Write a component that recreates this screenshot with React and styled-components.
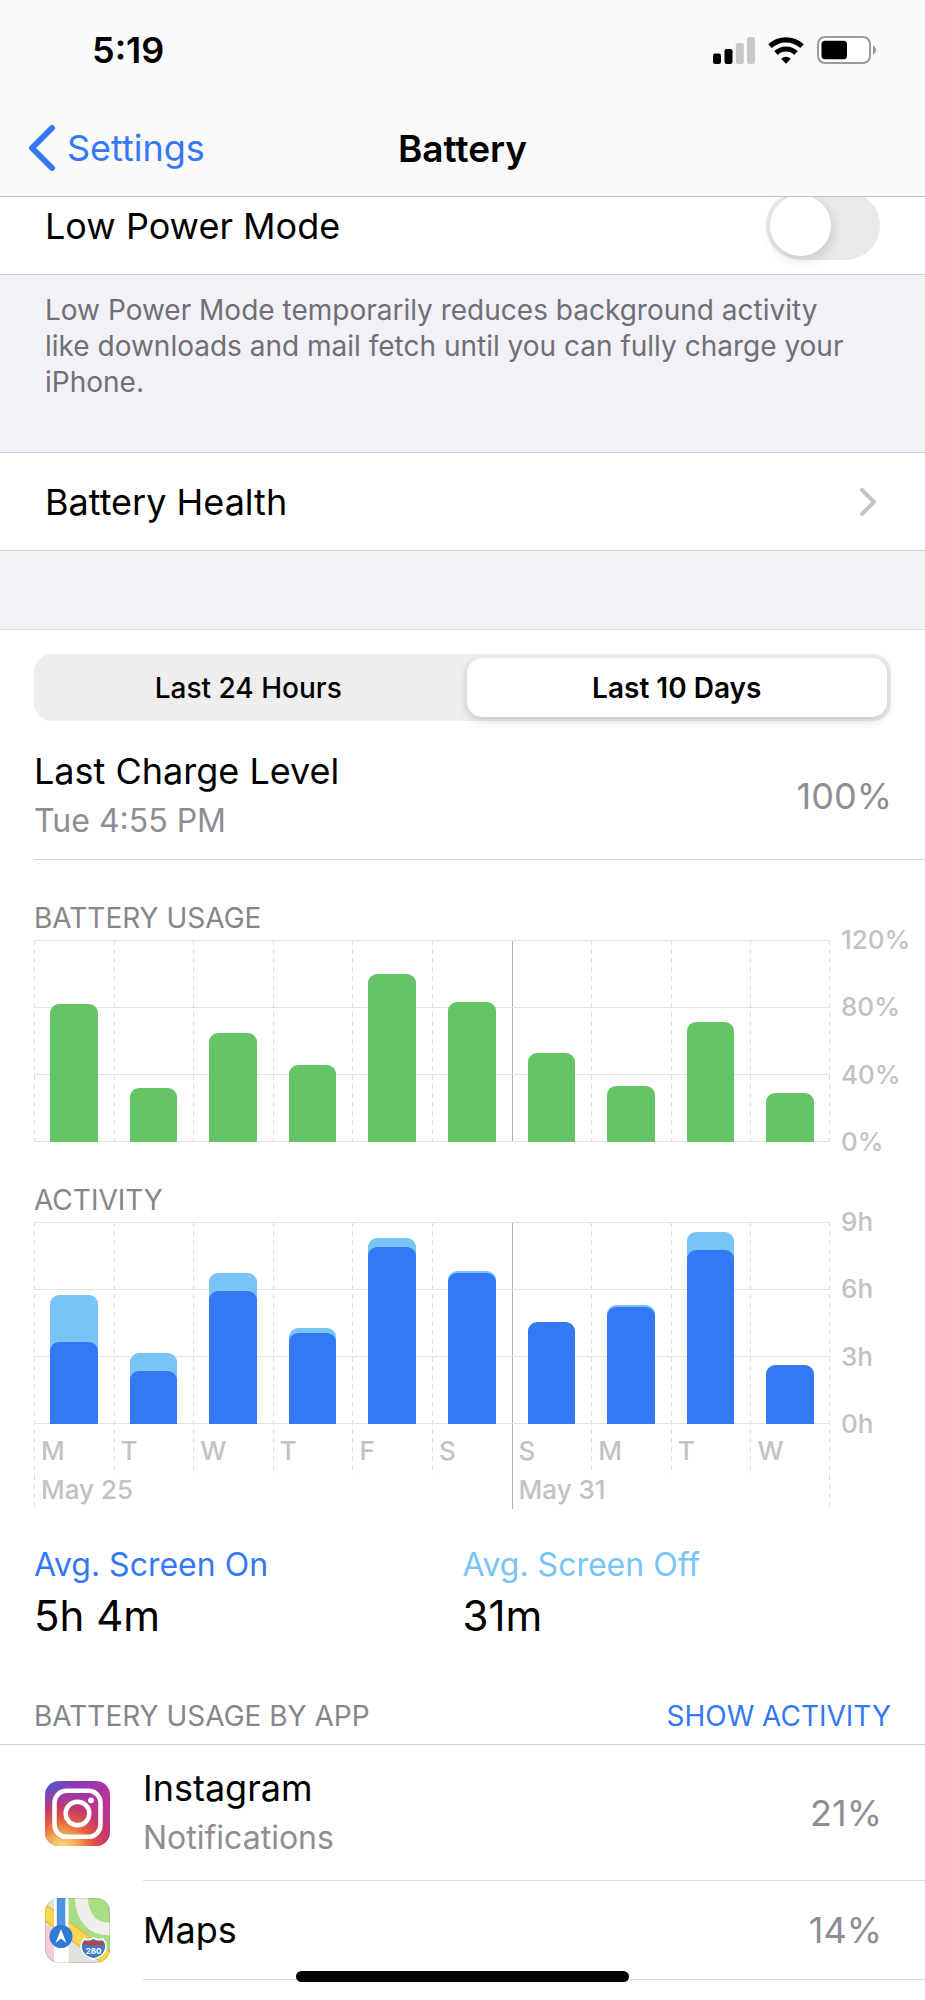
import React, { useState } from 'react';
import styled, { createGlobalStyle, css } from 'styled-components';

const usage = [82, 32, 65, 46, 100, 83, 53, 33, 71, 29];

// minutes per day: total and with the screen on
const activity = [
  { day: 'M', total: 345, on: 219 },
  { day: 'T', total: 189, on: 141 },
  { day: 'W', total: 405, on: 356 },
  { day: 'T', total: 257, on: 243 },
  { day: 'F', total: 498, on: 474 },
  { day: 'S', total: 409, on: 404 },
  { day: 'S', total: 273, on: 273 },
  { day: 'M', total: 318, on: 312 },
  { day: 'T', total: 513, on: 465 },
  { day: 'W', total: 157, on: 157 },
];

const apps = [
  { name: 'Instagram', detail: 'Notifications', percent: '21%', Icon: InstagramIcon },
  { name: 'Maps', percent: '14%', Icon: MapsIcon },
];

const WEEK_START = 6;

function SignalIcon() {
  return (
    <svg width="42" height="27" viewBox="0 0 42 27" aria-hidden="true">
      <rect x="0" y="16.500" width="8" height="10.500" rx="2.200" />
      <rect x="11.500" y="12" width="8" height="15" rx="2.200" />
      <rect x="22.800" y="6" width="8" height="21" rx="2.200" fill="#c8c8c9" />
      <rect x="34" y="0" width="8" height="27" rx="2.200" fill="#c8c8c9" />
    </svg>
  );
}

function WifiIcon() {
  return (
    <svg width="36" height="27" viewBox="0 0 36 27" aria-hidden="true">
      <g fill="none" stroke="#000" strokeWidth="5.200">
        <path d="M2 9.200 A23.500 23.500 0 0 1 34 9.200" />
        <path d="M8 16 A14.500 14.500 0 0 1 28 16" />
      </g>
      <path d="M18 26.800 L13.200 21.800 A6.700 6.700 0 0 1 22.800 21.800 Z" />
    </svg>
  );
}

function BatteryIcon() {
  return (
    <svg width="60" height="28" viewBox="0 0 60 28" aria-hidden="true">
      <rect x="1" y="1" width="52" height="26" rx="7" fill="#fff" stroke="#9b9b9c" strokeWidth="2" />
      <rect x="4.500" y="4.800" width="25.500" height="18.500" rx="3.500" />
      <path d="M56 9.500 Q59 11 59 14 T56 18.500 Z" fill="#9b9b9c" />
    </svg>
  );
}

function InstagramIcon() {
  return (
    <svg width="65" height="65" viewBox="0 0 65 65" aria-hidden="true">
      <defs>
        <linearGradient id="igBase" x1="0" y1="0" x2="1" y2="1">
          <stop offset="0" stopColor="#4a5fd0" />
          <stop offset="0.250" stopColor="#8a3ab5" />
          <stop offset="0.600" stopColor="#b8349a" />
          <stop offset="1" stopColor="#c93570" />
        </linearGradient>
        <radialGradient id="igGlow" cx="0.270" cy="1.050" r="0.950">
          <stop offset="0" stopColor="#fbdc80" />
          <stop offset="0.200" stopColor="#f5b75c" />
          <stop offset="0.450" stopColor="#e8643c" />
          <stop offset="0.700" stopColor="#cc3a62" stopOpacity="0.800" />
          <stop offset="1" stopColor="#a838a0" stopOpacity="0" />
        </radialGradient>
      </defs>
      <rect width="65" height="65" rx="14" fill="url(#igBase)" />
      <rect width="65" height="65" rx="14" fill="url(#igGlow)" />
      <g fill="none" stroke="#fff" strokeWidth="4.500">
        <rect x="9.500" y="9.800" width="46" height="46" rx="12" />
        <circle cx="32.500" cy="32.500" r="11.800" />
      </g>
      <circle cx="46" cy="19.300" r="2.900" fill="#fff" />
    </svg>
  );
}

function MapsIcon() {
  return (
    <svg width="65" height="65" viewBox="0 0 65 65" aria-hidden="true">
      <defs>
        <clipPath id="mapsClip">
          <rect width="65" height="65" rx="14" />
        </clipPath>
      </defs>
      <g clipPath="url(#mapsClip)">
        <rect width="65" height="65" fill="#e2e2dc" />
        <path d="M23 0 H65 V56 L23 28 Z" fill="#a9dd86" />
        <path d="M0 26 L10 33 V65 H0 Z" fill="#f5cbd5" />
        <path d="M36 -2 Q38 32 66 31" fill="none" stroke="#f1efe9" strokeWidth="13" />
        <path d="M-2 13 L66 63" stroke="#f1b93e" strokeWidth="15" />
        <path d="M-2 13 L66 63" stroke="#f8d853" strokeWidth="12" />
        <rect x="9" width="14.500" height="65" fill="#fff" />
        <rect x="11.800" width="8.500" height="40" fill="#4f93de" />
        <circle cx="16" cy="38.500" r="11.500" fill="#3079d6" />
        <path d="M16 31 L21.500 45 L16 40.500 L10.500 45 Z" fill="#fff" />
        <path
          d="M39 41 Q43 43 48.500 40 Q54 43 58 41 L60.500 45 Q63 57 48.500 61 Q34 57 36.500 45 Z"
          fill="#3a7ccb"
          stroke="#fff"
          strokeWidth="1.500"
        />
        <path d="M39.500 43 Q44 45 48.500 42.500 Q53 45 57.500 43 L59 47 H38 Z" fill="#d1382f" />
        <text x="48.500" y="55.500" fill="#fff" fontSize="8" fontWeight="700" textAnchor="middle">
          280
        </text>
      </g>
      <rect x="0.500" y="0.500" width="64" height="64" rx="13.500" fill="none" stroke="#000" strokeOpacity="0.100" />
    </svg>
  );
}

function App() {
  const [lowPower, setLowPower] = useState(false);
  const [range, setRange] = useState('10d');

  return (
    <Screen>
      <GlobalStyle />
      <Header>
        <StatusBar>
          <Clock>5:19</Clock>
          <StatusIcons>
            <SignalIcon />
            <WifiIcon />
            <BatteryIcon />
          </StatusIcons>
        </StatusBar>
        <NavBar>
          <BackLink href="#settings">
            <svg width="28" height="48" viewBox="0 0 28 48" aria-hidden="true">
              <path d="M24 4 L4 24 L24 44" />
            </svg>
            Settings
          </BackLink>
          <Title>Battery</Title>
        </NavBar>
      </Header>

      <Main>
        <SettingLabel htmlFor="low-power">
          Low Power Mode
          <Switch
            id="low-power"
            type="checkbox"
            role="switch"
            checked={lowPower}
            onChange={(e) => setLowPower(e.target.checked)}
          />
        </SettingLabel>
        <Note>
          Low Power Mode temporarily reduces background activity like downloads and mail fetch until
          you can fully charge your iPhone.
        </Note>
        <SettingLink href="#battery-health">
          Battery Health
          <svg width="18" height="28" viewBox="0 0 18 28" aria-hidden="true">
            <path d="M3 2 L15 14 L3 26" />
          </svg>
        </SettingLink>

        <Panel>
          <Segmented>
            <Segment $active={range === '24h'} onClick={() => setRange('24h')}>
              Last 24 Hours
            </Segment>
            <Segment $active={range === '10d'} onClick={() => setRange('10d')}>
              Last 10 Days
            </Segment>
          </Segmented>

          <ChargeRow>
            <div>
              <ItemTitle>Last Charge Level</ItemTitle>
              <ItemDetail>Tue 4:55 PM</ItemDetail>
            </div>
            <Percent>100%</Percent>
          </ChargeRow>

          {/* Battery usage */}
          <Caption>Battery Usage</Caption>
          <Chart>
            <Columns>
              {usage.map((value, index) => (
                <Column key={index} $solid={index === WEEK_START}>
                  <Plot>
                    <Bar $color="#65c466" style={{ height: `${value / 1.2}%` }} />
                  </Plot>
                </Column>
              ))}
            </Columns>
            <Axis>
              <span>120%</span>
              <span>80%</span>
              <span>40%</span>
              <span>0%</span>
            </Axis>
          </Chart>

          {/* Activity */}
          <Caption>Activity</Caption>
          <Chart>
            <div>
              <Columns>
                {activity.map(({ day, total, on }, index) => (
                  <Column key={index} $solid={index === WEEK_START}>
                    <Plot>
                      <Bar $color="#78c5f5" style={{ height: `${total / 5.4}%` }}>
                        <ScreenOn style={{ height: `${(on / total) * 100}%` }} />
                      </Bar>
                    </Plot>
                    <Day>{day}</Day>
                  </Column>
                ))}
              </Columns>
              <Weeks>
                <Week>May 25</Week>
                <Week $solid>May 31</Week>
              </Weeks>
            </div>
            <Axis>
              <span>9h</span>
              <span>6h</span>
              <span>3h</span>
              <span>0h</span>
            </Axis>
          </Chart>

          <Averages>
            <div>
              <AverageLabel $color="#3478f6">Avg. Screen On</AverageLabel>
              <AverageValue>5h 4m</AverageValue>
            </div>
            <div>
              <AverageLabel $color="#78c5f5">Avg. Screen Off</AverageLabel>
              <AverageValue>31m</AverageValue>
            </div>
          </Averages>

          {/* Usage by app */}
          <ListHeader>
            <ListCaption>Battery Usage by App</ListCaption>
            <TextButton>Show Activity</TextButton>
          </ListHeader>
          <AppList>
            {apps.map(({ name, detail, percent, Icon }) => (
              <AppRow key={name}>
                <Icon />
                <AppBody>
                  <div>
                    <ItemTitle>{name}</ItemTitle>
                    {detail && <ItemDetail>{detail}</ItemDetail>}
                  </div>
                  <Percent>{percent}</Percent>
                </AppBody>
              </AppRow>
            ))}
          </AppList>
        </Panel>
      </Main>
      <HomeIndicator />
    </Screen>
  );
}

export default App;

const GlobalStyle = createGlobalStyle`
  *, *::before, *::after {
    box-sizing: border-box;
  }
  body {
    margin: 0;
    background-color: #fff;
    color: #000;
    font-family: Inter, "Liberation Sans", sans-serif;
    font-size: 36px;
  }
  h1, h2, p, ul {
    margin: 0;
    padding: 0;
    font-size: inherit;
    font-weight: 400;
  }
  button, input {
    font-family: inherit;
    margin: 0;
    padding: 0;
    border: none;
    background: none;
    cursor: pointer;
  }
  a {
    text-decoration: none;
  }
`;

const dashed = 'repeating-linear-gradient(to bottom, #dedede 0 5px, transparent 5px 9px)';
const solid = 'linear-gradient(#b2b2b4, #b2b2b4)';

const Screen = styled.div`
  min-height: 100vh;
  overflow-x: clip;
`;

const Header = styled.header`
  position: sticky;
  top: 0;
  z-index: 2;
  background-color: #fafafb;
  border-bottom: 1px solid #c4c4c6;
`;

const StatusBar = styled.div`
  display: flex;
  align-items: center;
  justify-content: space-between;
  height: 100px;
  padding: 0 48px 0 92px;
`;

const Clock = styled.span`
  font-weight: 600;
`;

const StatusIcons = styled.div`
  display: flex;
  align-items: center;
  gap: 13px;
`;

const NavBar = styled.nav`
  display: grid;
  grid-template-columns: 1fr auto 1fr;
  align-items: center;
  height: 96px;
  padding: 0 28px;
`;

const BackLink = styled.a`
  display: flex;
  align-items: center;
  gap: 11px;
  color: #3478f6;
  svg {
    fill: none;
    stroke: #3478f6;
    stroke-width: 6;
    stroke-linecap: round;
    stroke-linejoin: round;
  }
`;

const Title = styled.h1`
  && {
    font-size: 37px;
    font-weight: 600;
  }
`;

const Main = styled.main`
  margin-top: -20px;
`;

const row = css`
  display: flex;
  align-items: center;
  justify-content: space-between;
  height: 98px;
  padding: 0 45px;
  background-color: #fff;
  border-bottom: 1px solid #d2d2d6;
  color: #000;
`;

const SettingLabel = styled.label`
  ${row}
`;

const SettingLink = styled.a`
  ${row}
  height: 99px;
  border-top: 1px solid #d2d2d6;
  svg {
    margin: 0 3px;
    fill: none;
    stroke: #c4c4c7;
    stroke-width: 4;
    stroke-linecap: round;
    stroke-linejoin: round;
  }
`;

const Switch = styled.input`
  appearance: none;
  display: flex;
  align-items: center;
  width: 114px;
  height: 69px;
  padding: 0 4px;
  border-radius: 35px;
  background-color: ${(props) => (props.checked ? '#65c466' : '#e9e9ea')};
  &::before {
    content: '';
    width: 61px;
    height: 61px;
    margin-left: ${(props) => (props.checked ? '45px' : '0')};
    border-radius: 50%;
    background-color: #fff;
    box-shadow: 2px 4px 12px rgba(0, 0, 0, 0.14);
  }
`;

const Note = styled.p`
  padding: 17px 64px 52px 45px;
  background-color: #f2f1f7;
  color: #6f6f74;
  font-size: 28px;
  line-height: 36px;
`;

const Panel = styled.section`
  padding-top: 25px;
  border-top: 78px solid #f2f1f7;
  box-shadow: inset 0 1px #dfdfe3;
`;

const Segmented = styled.div`
  display: grid;
  grid-template-columns: 1fr 1fr;
  gap: 8px;
  margin: 0 34px;
  padding: 4px;
  border-radius: 18px;
  background-color: #eeeeee;
`;

const Segment = styled.button`
  height: 59px;
  border-radius: 15px;
  font-size: 28px;
  font-weight: 500;
  color: #000;
  ${(props) =>
    props.$active &&
    css`
      font-weight: 600;
      background-color: #fff;
      box-shadow: 0 3px 10px rgba(0, 0, 0, 0.18);
    `}
`;

const ChargeRow = styled.div`
  display: flex;
  align-items: center;
  justify-content: space-between;
  margin-left: 34px;
  padding: 25px 33px 14px 0;
  border-bottom: 1px solid #d6d6d8;
`;

const ItemTitle = styled.p`
  font-size: 36px;
  line-height: 50px;
`;

const ItemDetail = styled.p`
  color: #8e8e92;
  font-size: 32px;
  line-height: 49px;
`;

const Percent = styled.span`
  color: #8e8e92;
  font-size: 36px;
`;

const Caption = styled.h2`
  && {
    margin: 40px 34px 4px;
    color: #868688;
    font-size: 28px;
    line-height: 36px;
    text-transform: uppercase;
  }
`;

const Chart = styled.div`
  display: grid;
  grid-template-columns: 1fr 84px;
  align-items: start;
  gap: 11px;
  padding-left: 34px;
  color: #c2c2c4;
  font-size: 26px;
  font-weight: 500;
`;

const Columns = styled.div`
  display: grid;
  grid-template-columns: repeat(10, 1fr);
  background: ${dashed} right / 1px 100% no-repeat;
`;

const Column = styled.div`
  background: ${(props) => (props.$solid ? solid : dashed)} left / 1px 100% no-repeat;
`;

const Plot = styled.div`
  display: flex;
  align-items: flex-end;
  justify-content: center;
  height: 202px;
  background: repeating-linear-gradient(to bottom, #e3e3e4 0 1px, transparent 1px 67px);
`;

const Bar = styled.div`
  display: flex;
  align-items: flex-end;
  width: 60%;
  border-radius: 9px 9px 0 0;
  background-color: ${(props) => props.$color};
  overflow: hidden;
`;

const ScreenOn = styled.div`
  width: 100%;
  border-radius: 9px 9px 0 0;
  background-color: #3478f6;
`;

const Axis = styled.div`
  display: flex;
  flex-direction: column;
  justify-content: space-between;
  height: 234px;
  margin: -16px 0;
  line-height: 32px;
`;

const Day = styled.div`
  padding: 3px 0 0 7px;
  line-height: 48px;
`;

const Weeks = styled.div`
  display: grid;
  grid-template-columns: 6fr 4fr;
  background: ${dashed} right / 1px 100% no-repeat;
`;

const Week = styled.div`
  padding: 0 0 4px 7px;
  line-height: 30px;
  background: ${(props) => (props.$solid ? solid : dashed)} left / 1px 100% no-repeat;
`;

const Averages = styled.div`
  display: grid;
  grid-template-columns: 1fr 1fr;
  margin: 33px 34px 0;
`;

const AverageLabel = styled.p`
  color: ${(props) => props.$color};
  font-size: 32px;
  line-height: 46px;
`;

const AverageValue = styled.p`
  font-size: 42px;
  line-height: 56px;
`;

const ListHeader = styled.div`
  display: flex;
  align-items: center;
  justify-content: space-between;
  padding: 54px 34px 10px;
  border-bottom: 1px solid #cfcfd2;
`;

const ListCaption = styled.h2`
  && {
    color: #868688;
    font-size: 28px;
    line-height: 36px;
    text-transform: uppercase;
  }
`;

const TextButton = styled.button`
  color: #3478f6;
  font-size: 28px;
  line-height: 36px;
  text-transform: uppercase;
`;

const AppList = styled.ul`
  list-style: none;
`;

const AppRow = styled.li`
  display: flex;
  align-items: center;
  gap: 33px;
  padding-left: 45px;
`;

const AppBody = styled.div`
  display: flex;
  flex: 1;
  align-items: center;
  justify-content: space-between;
  min-height: 99px;
  padding: 18px 43px 18px 0;
  border-bottom: 1px solid #dcdcde;
`;

const HomeIndicator = styled.div`
  position: fixed;
  bottom: 18px;
  left: 32%;
  right: 32%;
  z-index: 3;
  height: 11px;
  border-radius: 6px;
  background-color: #000;
`;
